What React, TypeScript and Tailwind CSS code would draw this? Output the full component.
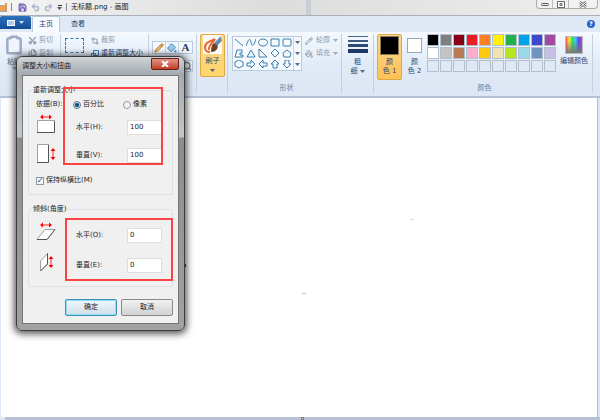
import { ReactNode } from "react";
import { Clipboard, Scissors, Files, Crop, Pencil, PaintBucket, Save, Undo2, Redo2, Search, RotateCw } from "lucide-react";

const rows = [
  ["#000000", "#7f7f7f", "#880015", "#ed1c24", "#ff7f27", "#fff200", "#22b14c", "#00a2e8", "#3f48cc", "#a349a4"],
  ["#ffffff", "#c3c3c3", "#b97a57", "#ffaec9", "#ffc90e", "#efe4b0", "#b5e61d", "#99d9ea", "#7092be", "#c8bfe7"],
  Array(10).fill("#dfe8f5"),
];

const shapes = [
  "M1 1 9 8",
  "M0 8C3 0 4 0 5 4S7 10 10 1",
  "M5 1C-1 1-1 8 5 8S11 1 5 1",
  "M1 1H9V8H1Z",
  "M2 1H8Q9 1 9 2V7Q9 8 8 8H2Q1 8 1 7V2Q1 1 2 1",
  "M3 1H8V4H6V6H9V8H1Z",
  "M5 1 9 8H1Z",
  "M1 0V8H9Z",
  "M5 0 9 4 5 8 1 4Z",
  "M5 1 9 4 8 8H2L1 4Z",
  "M5 0 9 2V6L5 8 1 6V2Z",
  "M1 3H5V0L9 4 5 8V6H1Z",
  "M9 3H5V0L1 4 5 8V6H9Z",
  "M3 8V4H1L5 0 9 4H7V8Z",
  "M3 0V4H1L5 8 9 4H7V0Z",
];

function Group({ children, className = "" }: { children: ReactNode; className?: string }) {
  return <div className={`flex shrink-0 flex-col border-r border-[#c3d0e0] ${className}`}>{children}</div>;
}

function Caret() {
  return (
    <svg width="5" height="3" viewBox="0 0 5 3" className="inline-block fill-current align-middle opacity-80">
      <path d="M0 0H5L2.500 3Z" />
    </svg>
  );
}

function TitleBar() {
  return (
    <header className="flex h-[15px] items-start justify-between bg-linear-to-r from-[#f4f4f4] from-0% via-[#dcdcdc] via-45% to-[#eeeeee]">
      <div className="flex h-[14px] items-center text-[7px] text-[#222]">
        <svg width="8" height="11" viewBox="0 0 8 11">
          <path d="M0 3H5V10H0Z" fill="#6fb6dc" />
          <path d="M0 4 5 3V8Q2 11 0 9Z" fill="#f0a04c" />
          <path d="M6 1V10" stroke="#cf7b35" strokeWidth="1.500" />
        </svg>
        <span className="ml-[3px] h-2 w-px bg-[#888]" />
        <Save size={9} strokeWidth={3} className="ml-[6px] fill-[#e6e0f4] text-[#6c56a8]" />
        <Undo2 size={9} strokeWidth={4} className="ml-1 text-[#a9b6cc]" />
        <Redo2 size={9} strokeWidth={4} className="ml-1 text-[#a9b6cc]" />
        <span className="ml-1 flex flex-col items-center gap-px text-[#333]">
          <span className="h-px w-1 bg-current" />
          <Caret />
        </span>
        <span className="ml-1 h-2 w-px bg-[#888]" />
        <h1 className="ml-1">无标题.png - 画图</h1>
      </div>
      <span className="ml-auto h-full w-[5px] bg-[#c9cfd5]" />
      <div className="mr-[2px] ml-[225px] flex h-[9px] rounded-b-sm border border-t-0 border-[#aaa] bg-[#f1f1f1] text-[#555]">
        <button aria-label="最小化" className="flex w-4 items-center justify-center border-r border-[#bbb]">
          <span className="h-[3px] w-2 rounded-sm border border-current" />
        </button>
        <button aria-label="最大化" className="flex w-4 items-center justify-center border-r border-[#bbb]">
          <svg width="8" height="7" viewBox="0 0 8 7" fill="#fff" stroke="#666">
            <path d="M.5.5H7.500V6.500H.5ZM3 2.500H5V4.500H3Z" />
          </svg>
        </button>
        <button aria-label="关闭" className="flex w-7 items-center justify-center">
          <svg width="8" height="7" viewBox="0 0 8 7" fill="none">
            <path d="M1 1 7 6M7 1 1 6" stroke="#666" strokeWidth="2.500" />
            <path d="M1 1 7 6M7 1 1 6" stroke="#fff" strokeWidth="1" />
          </svg>
        </button>
      </div>
    </header>
  );
}

function Tabs() {
  return (
    <nav className="flex h-[17px] items-end border-t border-[#a9b0ba] bg-[#dfe9f5] text-[7px] text-[#25456f]">
      <button aria-label="文件" className="mb-[3px] flex h-[13px] w-[31px] items-center justify-center gap-1 rounded-t-xs bg-linear-to-b from-[#2f72bd] to-[#134c97] text-white">
        <span className="h-[6px] w-2 border border-white bg-[#a9ccef]" />
        <Caret />
      </button>
      <button className="ml-px h-4 w-7 rounded-t-xs border border-b-0 border-[#b7c8dc] bg-[#f8fbff]">主页</button>
      <button className="ml-1 h-4 w-7">查看</button>
      <button aria-label="帮助" className="mr-[5px] mb-1 ml-auto size-2 rounded-full bg-[#2c62c8] text-[6px] leading-[8px] font-bold text-white">?</button>
    </nav>
  );
}

function Ribbon() {
  return (
    <section className="flex h-[66px] overflow-hidden border-b-2 border-[#b3c2d8] bg-linear-to-b from-[#f5f9fe] via-[#e1ebf7] to-[#dce6f4] pt-[2px] pb-[3px] text-[7px] leading-[9px] text-[#2b4770]">
      <Group className="w-[61px]">
        <div className="flex text-[#8c9ab0]">
          <button className="flex w-7 flex-col items-center pt-px">
            <Clipboard size={20} strokeWidth={3} className="fill-[#f1f5fb] text-[#9dacc7]" />
            <span className="mt-[3px] whitespace-nowrap text-[#5a6f90]">粘贴</span>
            <Caret />
          </button>
          <div className="flex flex-col gap-1 pt-[2px]">
            <button className="flex items-center gap-[2px]"><Scissors size={9} strokeWidth={3} className="-rotate-90" />剪切</button>
            <button className="flex items-center gap-[2px]"><Files size={9} strokeWidth={3} />复制</button>
          </div>
        </div>
      </Group>
      <Group className="w-[88px]">
        <div className="flex gap-1 pt-[2px] pl-1">
          <button aria-label="选择" className="mt-[2px] h-[15px] w-[19px] border border-dashed border-[#3179b8]" />
          <div className="flex flex-col gap-1 pl-[3px]">
            <button className="flex items-center gap-[2px] text-[#8c9ab0]"><Crop size={8} strokeWidth={3} />裁剪</button>
            <button className="flex items-center gap-[2px] whitespace-nowrap">
              <svg width="8" height="8" viewBox="0 0 8 8" fill="none" stroke="#3479b5"><path d="M2.500.5H7.500V5.500H2.500ZM.5 3.500H4.500V7.500H.5Z" /></svg>
              重新调整大小
            </button>
            <button className="flex items-center gap-[2px]"><RotateCw size={8} />旋转</button>
          </div>
        </div>
      </Group>
      <Group className="w-12 pl-[3px]">
        <div className="mt-[7px] grid w-[41px] grid-cols-3 border border-[#b9c9de] bg-[#f3f8fe]">
          <button aria-label="铅笔" className="flex h-[11px] items-center justify-center border-r border-[#c7d4e5]"><Pencil size={10} className="fill-[#f2c35a] text-[#a66b32]" /></button>
          <button aria-label="填充" className="flex h-[11px] items-center justify-center border-r border-[#c7d4e5]"><PaintBucket size={10} className="fill-[#9cc8e8] text-[#3b86c2]" /></button>
          <button className="h-[11px] font-['Liberation_Serif',serif] text-[11px] leading-[11px] font-bold text-[#203c67]">A</button>
        </div>
        <div className="mt-[6px] flex h-3 w-[41px] justify-end border border-[#b9c9de] bg-[#eef4fb]"><Search size={10} strokeWidth={3} className="text-[#6b7480]" /></div>
      </Group>
      <Group className="w-[31px] pl-[3px]">
        <button className="flex h-[43px] w-[25px] flex-col items-center rounded-xs border border-[#dca947] bg-linear-to-b from-[#fbd68d] to-[#ffd46b]">
          <svg width="19" height="19" viewBox="0 0 19 19" className="shrink-0">
            <path d="M0 0H19V19H0Z" fill="#fbfaf7" />
            <path d="M7 17C1 17 1 11 4 8C8 5 11 5 12 4C10 8 5 10 6 15" stroke="#e96730" strokeWidth="2" fill="none" />
            <path d="M18 1 11 8 14 11 19 6Z" fill="#668faf" />
            <path d="M11 8Q8 10 8 17Q14 17 15 11Z" fill="#704225" />
          </svg>
          <span className="mt-[3px]">刷子</span>
          <span className="flex h-2 items-center"><Caret /></span>
        </button>
      </Group>
      <Group className="w-[114px] justify-between pl-1">
        <div className="flex pt-[2px]">
          <div className="flex h-[35px] w-[70px] border border-[#b9c9de] bg-[#f5f9fe]">
            <div className="grid grow grid-cols-5 place-items-center">
              {shapes.map((d) => (
                <svg key={d} width="10" height="9" viewBox="0 0 10 9" fill="none" stroke="#397fac"><path d={d} /></svg>
              ))}
            </div>
            <div className="flex w-2 flex-col items-center justify-around border-l border-[#c7d4e5]">
              <Caret /><Caret /><Caret />
            </div>
          </div>
          <div className="flex flex-col gap-1 pl-[3px] text-[#8c9ab0]">
            <button className="flex items-center gap-[3px] whitespace-nowrap"><Pencil size={8} strokeWidth={3} />轮廓 <Caret /></button>
            <button className="flex items-center gap-[3px] whitespace-nowrap"><PaintBucket size={8} strokeWidth={3} />填充 <Caret /></button>
          </div>
        </div>
        <p className="text-center text-[#6b7f9b]">形状</p>
      </Group>
      <Group className="w-8 items-center">
        <button className="flex w-[20px] flex-col items-center gap-[2px] pt-[2px]">
          <span className="h-px w-full bg-[#4a688c]" />
          <span className="mt-px h-[2px] w-full bg-[#3c5c82]" />
          <span className="h-[3px] w-full bg-[#2c4c75]" />
          <span className="h-1 w-full bg-[#1d3864]" />
          <span className="mt-[3px]">粗<br />细 <Caret /></span>
        </button>
      </Group>
      <Group className="w-[219px] justify-between pl-[3px]">
        <div className="flex">
          <button className="flex h-[46px] w-[25px] flex-col items-center rounded-xs border border-[#dca947] bg-linear-to-b from-[#fbd68d] to-[#ffc152] pt-px">
            <span className="size-[19px] border border-[#8b7951] bg-black" />
            <span className="mt-[3px]">颜<br />色 1</span>
          </button>
          <button className="flex w-[25px] flex-col items-center pt-1">
            <span className="size-[15px] border border-[#9aa7b9] bg-white" />
            <span className="mt-[5px]">颜<br />色 2</span>
          </button>
          <div className="grid grid-cols-10 gap-px self-start">
            {rows.flat().map((color, i) => (
              <button key={i} aria-label={color} className="size-3 border border-[#b4bfcd]" style={{ backgroundColor: color }} />
            ))}
          </div>
          <button className="flex grow flex-col items-center pt-[2px] whitespace-nowrap">
            <span className="size-[18px] border border-[#bbb] bg-[linear-gradient(to_bottom,transparent_20%,#777),linear-gradient(to_right,#f55,#fe3,#3d5,#3cf,#54e,#d3d)]" />
            <span className="mt-[3px]">编辑颜色</span>
          </button>
        </div>
        <p className="text-center text-[#6b7f9b]">颜色</p>
      </Group>
    </section>
  );
}

function Field({ label, id, value }: { label: string; id: string; value: string }) {
  return (
    <div className="flex items-center">
      <label htmlFor={id} className="w-[51px]">{label}</label>
      <input id={id} defaultValue={value} className="h-[15px] w-[35px] border border-[#dedede] bg-white px-[2px]" />
    </div>
  );
}

// The outline goes light on the top and left edges, dark on the others
function SizeIcon({ outline, edge, vertical, x, y }: { outline: string; edge: string; vertical?: boolean; x: number; y: number }) {
  return (
    <svg width="20" height="26" viewBox="0 0 20 26" fill="none">
      <path d={outline} fill="#fff" stroke="#a0a0a0" />
      <path d={edge} stroke="#555" />
      <g transform={`translate(${x} ${y})${vertical ? " rotate(90)" : ""}`}>
        <path d="M-5 0H5" stroke="#f22" />
        <path d="M-6 0-3-2.500V2.500ZM6 0 3-2.500V2.500Z" fill="#f00" />
      </g>
    </svg>
  );
}

const radioClass =
  "size-2 appearance-none rounded-full border border-[#999] bg-[#f4f4f4] checked:border-[#5b7c96] checked:bg-[radial-gradient(#164c72_35%,#b9dcef_60%)]";

function ResizeDialog() {
  return (
    <div role="dialog" aria-label="调整大小和扭曲" className="absolute top-[56px] left-4 w-[169px] rounded-md border border-[#3c3c3c] bg-[linear-gradient(#d0d4d8,#a4abb0_17px,#c2c7cb_80px,#8c8c8c_81px,#a2a2a2)] px-[5px] pb-[6px] text-[7px] leading-[9px] text-[#222] shadow-[0_1px_7px_2px_rgba(0,0,0,0.65)]">
      <div className="flex h-[18px] items-center justify-between">
        <h2>调整大小和扭曲</h2>
        <button aria-label="关闭" className="mt-px flex h-[12px] w-7 items-center justify-center self-start rounded-b-xs border border-[#6b1f16] bg-linear-to-b from-[#dc9586] to-[#c43b20]">
          <svg width="8" height="6" viewBox="0 0 8 6"><path d="M1 0 7 6M7 0 1 6" stroke="#fff" strokeWidth="2" /></svg>
        </button>
      </div>
      <form className="flex flex-col border border-[#777] bg-[#f0f0f0] px-[5px] pt-[10px] pb-[7px]">
        <fieldset className="rounded-xs border border-[#dce1e6] px-[7px] pb-[9px]">
          <legend className="-ml-1 px-px">重新调整大小</legend>
          <div className="flex h-[19px] items-center">
            <span className="w-[37px]">依据(B):</span>
            <label className="flex w-[50px] items-center gap-[2px]"><input type="radio" name="unit" defaultChecked className={radioClass} />百分比</label>
            <label className="flex items-center gap-[2px]"><input type="radio" name="unit" className={radioClass} />像素</label>
          </div>
          <div className="flex items-center gap-5">
            <SizeIcon outline="M1.500 6.500H18.500V18.500H1.500Z" edge="M1 18.500H18.500V7" x={10} y={3} />
            <Field label="水平(H):" id="h" value="100" />
          </div>
          <div className="mt-[2px] flex items-center gap-5">
            <SizeIcon outline="M1.500 2.500H12.500V20.500H1.500Z" edge="M1 20.500H12.500V3" vertical x={17} y={12} />
            <Field label="垂直(V):" id="v" value="100" />
          </div>
          <label className="mt-2 flex items-center gap-[2px]">
            <input type="checkbox" defaultChecked className="flex size-2 appearance-none items-center justify-center border border-[#8b98a8] bg-[#f4f8fc] text-[8px] font-bold text-[#29467c] checked:before:content-['✓']" />
            保持纵横比(M)
          </label>
        </fieldset>
        <fieldset className="mt-[10px] rounded-xs border border-[#dce1e6] px-[7px] pb-2">
          <legend className="-ml-1 px-px">倾斜(角度)</legend>
          <div className="flex items-center gap-5 pt-2">
            <SizeIcon outline="M9 7.500H19L11 17.500H1Z" edge="M1 17.500H11L19 7.500" x={10} y={3} />
            <Field label="水平(O):" id="o" value="0" />
          </div>
          <div className="mt-1 flex items-center gap-5">
            <SizeIcon outline="M4.500 9 11.500 1.500V12L4.500 19Z" edge="M4.500 19 11.500 12V1.500" vertical x={15} y={10} />
            <Field label="垂直(E):" id="e" value="0" />
          </div>
        </fieldset>
        <div className="mt-[12px] flex justify-end gap-1">
          <button type="button" className="h-[17px] w-[52px] rounded-xs border border-[#3c93b8] bg-linear-to-b from-[#f0f8fc] to-[#cfdee8] shadow-[inset_0_0_0_1px_#8fdcf5]">确定</button>
          <button type="button" className="h-[17px] w-[52px] rounded-xs border border-[#888] bg-linear-to-b from-[#f2f2f2] to-[#d2d2d2]">取消</button>
        </div>
      </form>
      {/* Highlight boxes over the two sets of fields */}
      <div className="pointer-events-none absolute top-[30px] left-[46px] h-[78px] w-[100px] border-2 border-[#f84444]" />
      <div className="pointer-events-none absolute top-[161px] left-[48px] h-[63px] w-[108px] border-2 border-[#f84444]" />
    </div>
  );
}

export default function App() {
  return (
    <div className="relative flex min-h-screen flex-col overflow-hidden bg-[#dfe9f5] font-['DejaVu_Sans','Noto_Sans_CJK_SC',sans-serif]">
      <TitleBar />
      <Tabs />
      <Ribbon />
      <main className="relative mr-[2px] ml-px grow border-r border-[#bbb] bg-white">
        <span className="absolute top-[166px] left-[182px] size-[3px] bg-[#444]" />
        <span className="absolute top-[195px] left-[301px] h-px w-1 bg-[#bbc3cc]" />
        <span className="absolute top-[121px] left-[409px] h-px w-1 bg-[#dadde0]" />
      </main>
      <footer className="ml-[5px] flex h-[3px] justify-center bg-[#b7c1d6]">
        <span className="size-[3px] border border-[#777] bg-white" />
      </footer>
      <ResizeDialog />
    </div>
  );
}
